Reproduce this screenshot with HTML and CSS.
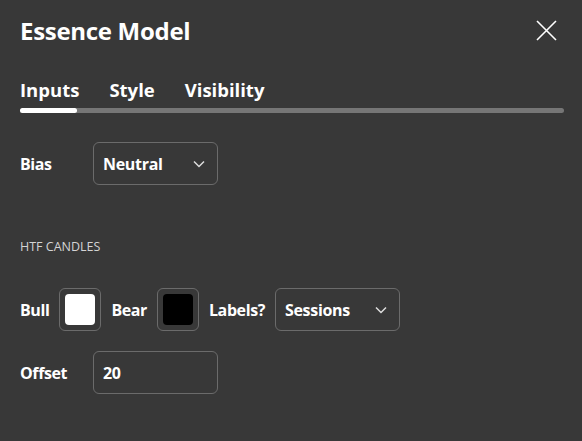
FILE: index.html
```html
<!DOCTYPE html>
<html lang="en">
<head>
  <meta charset="UTF-8">
  <title>Essence Model</title>
  <link rel="stylesheet" href="styles.css">
</head>
<body>

<div class="dialog">
  <div class="header">
    <h2 class="title">Essence Model</h2>
    <button class="close" aria-label="Close">
      <svg width="21" height="21" viewBox="0 0 21 21">
        <path d="M1 1 L20 20 M20 1 L1 20" stroke="#fff" stroke-width="1.6" fill="none"/>
      </svg>
    </button>
  </div>

  <div class="tabs">
    <span class="tab active">Inputs</span>
    <span class="tab">Style</span>
    <span class="tab">Visibility</span>
  </div>
  <div class="track"><div class="track-fill"></div></div>

  <div class="content">
    <div class="row">
      <span class="label label-wide">Bias</span>
      <div class="select">
        <span>Neutral</span>
        <svg class="chev" width="12" height="8" viewBox="0 0 12 8"><path d="M1 1.5 L6 6.5 L11 1.5" stroke="#ddd" stroke-width="1.5" fill="none"/></svg>
      </div>
    </div>

    <div class="group-title">HTF CANDLES</div>

    <div class="row">
      <span class="label">Bull</span>
      <div class="swatch"><div class="swatch-color white"></div></div>
      <span class="label">Bear</span>
      <div class="swatch"><div class="swatch-color black"></div></div>
      <span class="label">Labels?</span>
      <div class="select">
        <span>Sessions</span>
        <svg class="chev" width="12" height="8" viewBox="0 0 12 8"><path d="M1 1.5 L6 6.5 L11 1.5" stroke="#ddd" stroke-width="1.5" fill="none"/></svg>
      </div>
    </div>

    <div class="row">
      <span class="label label-wide">Offset</span>
      <div class="select">
        <span>20</span>
      </div>
    </div>
  </div>
</div>

</body>
</html>
```

FILE: styles.css
```css
body {
  margin: 0;
  background: #383838;
  font-family: "Open Sans", sans-serif;
  color: #fff;
}

.dialog {
  width: 582px;
  height: 441px;
  box-sizing: border-box;
  padding: 0 18px 0 20px;
}

.header {
  display: flex;
  justify-content: space-between;
  align-items: center;
  height: 60px;
}

.title {
  margin: 0;
  font-size: 24px;
  font-weight: 700;
  letter-spacing: -0.3px;
}

.close {
  background: none;
  border: none;
  padding: 0;
  margin-right: 7px;
  display: flex;
}

.tabs {
  display: flex;
  gap: 30px;
  margin-top: 14px;
  height: 30px;
  align-items: center;
}

.tab {
  font-size: 18.5px;
  font-weight: 700;
}

.track {
  margin-top: 4px;
  height: 5px;
  border-radius: 3px;
  background: #767676;
}

.track-fill {
  width: 57px;
  height: 100%;
  border-radius: 3px;
  background: #fff;
}

.content {
  padding-top: 29px;
}

.row {
  display: flex;
  align-items: center;
  gap: 10px;
  margin-bottom: 20px;
}

.label {
  font-size: 16px;
  font-weight: 700;
  letter-spacing: -0.4px;
}

.label-wide {
  width: 63px;
}

.select {
  width: 125px;
  height: 43px;
  box-sizing: border-box;
  border: 1px solid #6b6b6b;
  border-radius: 6px;
  display: flex;
  align-items: center;
  justify-content: space-between;
  padding: 0 12px 0 9px;
  font-size: 16px;
  font-weight: 700;
  letter-spacing: -0.3px;
}

.group-title {
  font-size: 12.5px;
  color: #d4d4d4;
  margin: 53px 0 33px;
}

.swatch {
  width: 42px;
  height: 43px;
  box-sizing: border-box;
  border: 1px solid #6b6b6b;
  border-radius: 6px;
  padding: 5px;
}

.swatch-color {
  width: 100%;
  height: 100%;
  border-radius: 4px;
}

.white { background: #fff; }
.black { background: #000; }
```
